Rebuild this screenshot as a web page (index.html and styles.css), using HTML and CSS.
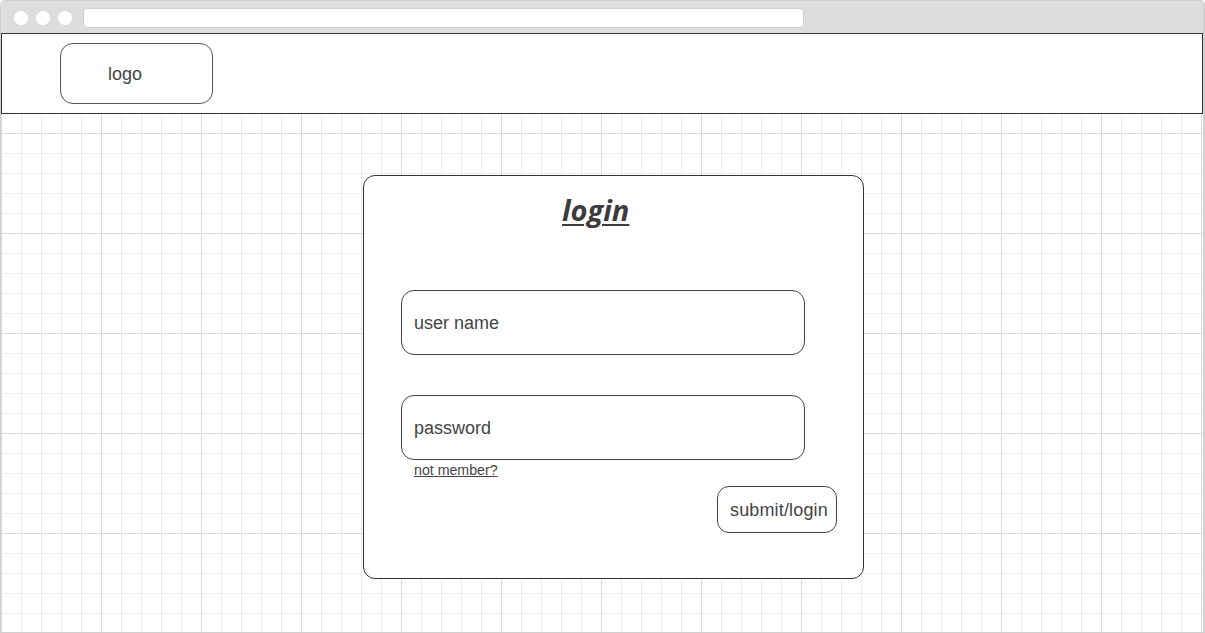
FILE: index.html
```html
<!DOCTYPE html>
<html>
<head>
<meta charset="utf-8">
<link rel="stylesheet" href="styles.css">
</head>
<body>
<div class="window">
  <div class="chrome">
    <div class="dots"><span class="dot"></span><span class="dot"></span><span class="dot"></span></div>
    <div class="address"></div>
  </div>
  <div class="content">
    <header class="header">
      <div class="logo">logo</div>
    </header>
    <main class="main">
      <section class="card">
        <h1 class="title">login</h1>
        <div class="field field-user">user name</div>
        <div class="field field-pass">password</div>
        <a class="not-member" href="#">not member?</a>
        <div class="actions">
          <div class="submit">submit/login</div>
        </div>
      </section>
    </main>
  </div>
</div>
</body>
</html>
```

FILE: styles.css
```css
* { box-sizing: border-box; }
html, body { margin: 0; padding: 0; }
body {
  font-family: "Liberation Sans", Arial, sans-serif;
  color: #444;
  background: #fff;
  width: 1205px;
  height: 633px;
  overflow: hidden;
}
.window {
  width: 1205px;
  height: 633px;
  border: 1px solid #cfcfcf;
  border-right-width: 2px;
  border-radius: 5px 5px 0 0;
  display: flex;
  flex-direction: column;
  overflow: hidden;
}
.chrome {
  height: 32px;
  background: #dddddd;
  display: flex;
  align-items: flex-start;
  padding-left: 13px;
  flex-shrink: 0;
}
.dots { display: flex; gap: 8px; margin-top: 10px; }
.dot {
  width: 14px;
  height: 14px;
  border-radius: 50%;
  background: #fff;
}
.address {
  margin: 7px 0 0 11px;
  width: 721px;
  height: 20px;
  background: #fff;
  border: 1px solid #cfcfcf;
  border-radius: 4px;
}
.content {
  flex: 1;
  background-color: #fff;
  background-image:
    linear-gradient(to right, #dcdcdc 1px, transparent 1px),
    linear-gradient(to bottom, #dcdcdc 1px, transparent 1px),
    linear-gradient(to right, #ececec 1px, transparent 1px),
    linear-gradient(to bottom, #ececec 1px, transparent 1px);
  background-size: 100px 100px, 100px 100px, 20px 20px, 20px 20px;
}
.header {
  height: 81px;
  background: #fff;
  border: 1px solid #333;
  padding: 9px 0 0 58px;
}
.logo {
  width: 153px;
  height: 61px;
  border: 1px solid #555;
  border-radius: 13px;
  padding: 1px 0 0 47px;
  display: flex;
  align-items: center;
  font-size: 18px;
  color: #444;
}
.main {
  padding: 61px 0 0 362px;
}
.card {
  width: 501px;
  height: 404px;
  background: #fff;
  border: 1px solid #333;
  border-radius: 12px;
  padding: 0 0 0 37px;
  display: flex;
  flex-direction: column;
  align-items: flex-start;
}
.title {
  margin: 15px 0 0 161px;
  font-family: "Open Sans", Roboto, sans-serif;
  font-style: italic;
  font-weight: 700;
  font-size: 29px;
  line-height: 38px;
  text-decoration: underline;
  text-decoration-thickness: 2px;
  text-underline-offset: 3px;
  color: #3c3c3c;
}
.field {
  width: 404px;
  height: 65px;
  border: 1px solid #444;
  border-radius: 13px;
  padding: 2px 0 0 12px;
  display: flex;
  align-items: center;
  font-size: 18px;
  color: #444;
  background: #fff;
}
.field-user { margin-top: 61px; }
.field-pass { margin-top: 40px; }
.not-member {
  margin: 1px 0 0 13px;
  font-size: 14.2px;
  line-height: 18px;
  color: #444;
  text-decoration: underline;
}
.actions {
  align-self: stretch;
  display: flex;
  padding-left: 316px;
  margin-top: 7px;
}
.submit {
  width: 120px;
  height: 47px;
  border: 1px solid #444;
  border-radius: 12px;
  padding: 2px 0 0 12px;
  display: flex;
  align-items: center;
  font-size: 18px;
  letter-spacing: 0.15px;
  color: #444;
}
```
